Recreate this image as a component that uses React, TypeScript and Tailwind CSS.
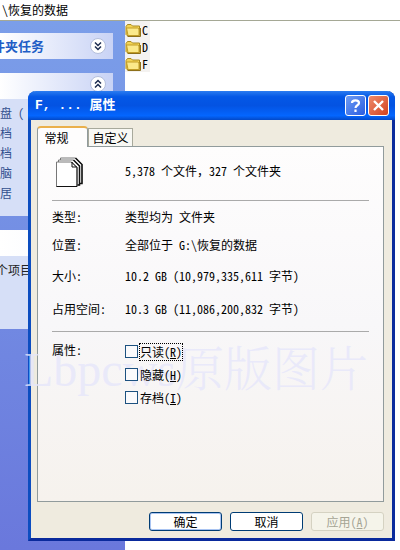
import React from "react";

const cjk = "font-['Noto_Sans_Mono_CJK_SC','Noto_Sans_CJK_SC',monospace]";

const details = [
  { label: "类型:", value: "类型均为 文件夹", row: "h-7" },
  { label: "位置:", value: "全部位于 G:\\恢复的数据", row: "h-7" },
  { label: "大小:", value: "10.2 GB (10,979,335,611 字节)", row: "h-[34px]" },
  { label: "占用空间:", value: "10.3 GB (11,086,200,832 字节)", row: "h-8" },
];

const attributes = [
  { id: "readonly", label: "只读", hotkey: "R", focused: true },
  { id: "hidden", label: "隐藏", hotkey: "H", focused: false },
  { id: "archive", label: "存档", hotkey: "I", focused: false },
];

const places = ["盘 (", "档", "档", "脑", "居"];

const FolderIcon = () => (
  <svg width="16" height="14" viewBox="0 0 16 14" aria-hidden="true">
    <path d="M1 3.5 2.5 1.5H6L7.5 3H14.5V12.5H2L1 11.5Z" fill="#f3d354" stroke="#a98a20" />
    <path d="M1.5 5H12.5L14 6V12.5H3Z" fill="#fbe98a" stroke="#c19c26" />
    <path d="M2.5 13.5H15.5V5" fill="none" stroke="#8d701a" />
  </svg>
);

const Chevrons = ({ up }: { up?: boolean }) => (
  <svg width="18" height="18" viewBox="0 0 18 18" aria-hidden="true">
    <circle cx="9" cy="9" r="7.5" fill="#fff" stroke="#b4bfdc" />
    <path
      d={up ? "M6 8.5 9 5.5 12 8.5M6 12.5 9 9.5 12 12.5" : "M6 5.5 9 8.5 12 5.5M6 9.5 9 12.5 12 9.5"}
      fill="none"
      stroke="#1c2c50"
      strokeWidth="1.5"
    />
  </svg>
);

const FilesIcon = () => (
  <svg width="28" height="31" viewBox="0 0 28 31" aria-hidden="true">
    <path d="M4.5 1H19.5L26 7.5V26.5H4.5Z" fill="#fff" stroke="#777" />
    <path d="M19.5 1 26 7.5V26.5H23.5" fill="none" stroke="#111" strokeWidth="1.5" />
    <path d="M2.5 3H17.5L23.5 9V28H2.5Z" fill="#fff" stroke="#777" />
    <path d="M17.5 3 23.5 9V28H21.5" fill="none" stroke="#111" strokeWidth="1.5" />
    <path d="M.5 5H15.5L21 10.5V29.5H.5Z" fill="#fff" stroke="#777" />
    <path d="M15.5 5 21 10.5V29.5H.5M16 5V10H21" fill="none" stroke="#111" />
  </svg>
);

const Sidebar = () => (
  <aside className="w-[125px] shrink-0 overflow-hidden whitespace-nowrap bg-gradient-to-b from-[#7b9ee9] to-[#6a78dc] text-[#33508f]">
    <section className="mt-3 mr-3 flex h-[26px] items-center justify-between bg-gradient-to-r from-white to-[#c9d3f5] pr-1.5">
      <h2 className="-ml-2 text-[13px] font-bold text-[#215dc6]">件夹任务</h2>
      <button type="button" aria-label="展开"><Chevrons /></button>
    </section>
    <section className="mt-3.5 mr-3">
      <div className="flex h-[26px] items-center justify-end bg-gradient-to-r from-white to-[#c9d3f5] pr-1.5 pb-1">
        <button type="button" aria-label="收起"><Chevrons up /></button>
      </div>
      <ul className="h-[117px] bg-[#d6dff7] pt-1">
        {places.map((name, i) => (
          <li key={i} className="h-5 leading-5">{name}</li>
        ))}
      </ul>
    </section>
    <section className="mt-3.5 mr-3">
      <div className="h-[26px] bg-gradient-to-r from-white to-[#f4f6fd]" />
      <p className="-ml-1 h-[73px] bg-[#d6dff7] pt-1.5 text-[#222]">个项目</p>
    </section>
  </aside>
);

const PropertiesDialog = () => (
  <div
    role="dialog"
    aria-label="属性"
    className="absolute top-[91px] right-[5px] left-7 rounded-t-lg border-[3px] border-t-0 border-[#0a2a9c] border-l-[#0c4dc0] bg-[#efebdf]"
  >
    <header className="-mx-[3px] flex h-[29px] items-center rounded-t-lg bg-[linear-gradient(#2b7cf0,#0458e6_20%,#0453e2_50%,#0466ff_85%,#0349c8)] pr-1.5 pl-[7px] text-white">
      <h1 className="flex-1 whitespace-pre font-['Liberation_Mono','Noto_Sans_CJK_SC',monospace] text-[13px] font-bold">F, ... 属性</h1>
      <div className="flex gap-0.5">
        <button type="button" aria-label="帮助" className="size-[21px] rounded-[3px] border border-white bg-gradient-to-br from-[#6f9cf3] to-[#2a5be0]">
          <svg width="19" height="19" viewBox="0 0 19 19" aria-hidden="true">
            <path d="M6 7C6 3.5 13 3.5 13 7C13 9.5 9.5 9 9.5 12M9.5 13.5V16" fill="none" stroke="#fff" strokeWidth="2.2" />
          </svg>
        </button>
        <button type="button" aria-label="关闭" className="size-[21px] rounded-[3px] border border-white bg-gradient-to-br from-[#ee8a6a] to-[#d2401c]">
          <svg width="19" height="19" viewBox="0 0 19 19" aria-hidden="true">
            <path d="M5 5 14 14M14 5 5 14" stroke="#fff" strokeWidth="2.4" />
          </svg>
        </button>
      </div>
    </header>
    <div className="pt-1.5 pr-2 pb-[7px] pl-1.5">
      <div role="tablist" className="flex items-end">
        <button type="button" role="tab" aria-selected="true" className="z-10 -mb-px h-[21px] w-[51px] rounded-t-sm border border-t-2 border-b-0 border-[#919b9c] border-t-[#eab04c] bg-[#fefdfd] pr-3">常规</button>
        <button type="button" role="tab" aria-selected="false" className="h-[18px] w-[45px] border border-b-0 border-[#a8a99c] bg-[#f8f8f4]">自定义</button>
      </div>
      <div className="min-h-[356px] border border-[#919b9c] bg-gradient-to-b from-[#fefdfd] via-[#f8f7f9] to-[#f6f2ed] px-3.5">
        <div className="flex h-[54px] items-start border-b border-[#aaa] pt-2.5">
          <div className="w-[73px] pl-1"><FilesIcon /></div>
          <p className="pt-1.5">5,378 个文件，327 个文件夹</p>
        </div>
        <dl className="border-b border-[#aaa] pt-0.5 pb-1.5">
          {details.map((d) => (
            <div key={d.label} className={`flex items-center ${d.row}`}>
              <dt className="w-[73px]">{d.label}</dt>
              <dd>{d.value}</dd>
            </div>
          ))}
        </dl>
        <div role="group" aria-labelledby="attributes" className="relative flex pt-2">
          <div aria-hidden="true" className="pointer-events-none absolute top-3.5 -left-7 whitespace-nowrap font-['Liberation_Serif','Noto_Serif_CJK_SC','Noto_Sans_Mono_CJK_SC',serif] text-5xl leading-[48px] font-light text-[#e6e6fb]/80">
            Lbpcws原版图片
          </div>
          <span id="attributes" className="relative w-[73px] pt-0.5">属性:</span>
          <div className="relative">
            {attributes.map((a) => (
              <div key={a.id} className="flex h-[23px] items-center gap-0.5">
                <input id={a.id} type="checkbox" className="size-[13px] appearance-none border border-[#1c5180] bg-[#fafafc]" />
                <label htmlFor={a.id} className={a.focused ? "outline-1 outline-dotted outline-black" : ""}>
                  {a.label}(<u>{a.hotkey}</u>)
                </label>
              </div>
            ))}
          </div>
        </div>
      </div>
      <footer className="mt-2.5 flex justify-end gap-2">
        <button type="button" className="h-[19px] w-[73px] rounded-[3px] border border-[#003c74] bg-white shadow-[inset_0_0_0_1px_#a9c4f2]">确定</button>
        <button type="button" className="h-[19px] w-[73px] rounded-[3px] border border-[#003c74] bg-white">取消</button>
        <button type="button" disabled className="h-[19px] w-[73px] rounded-[3px] border border-[#d5d2c2] bg-[#f5f4ea] text-[#a5a495]">应用(<u>A</u>)</button>
      </footer>
    </div>
  </div>
);

const App = () => {
  return (
    <div className={`relative flex min-h-screen flex-col overflow-hidden bg-white text-xs leading-4 text-black ${cjk}`}>
      <div className="h-[21px] border-b border-[#a5a895] pt-0.5 pl-0.5">\恢复的数据</div>
      <div className="flex flex-1">
        <Sidebar />
        <ul>
          {["C", "D", "F"].map((name) => (
            <li key={name} className="flex h-[17px] items-center gap-px bg-[#f4f2f0] pr-0.5">
              <FolderIcon />
              {name}
            </li>
          ))}
        </ul>
      </div>
      <PropertiesDialog />
    </div>
  );
};

export default App;
